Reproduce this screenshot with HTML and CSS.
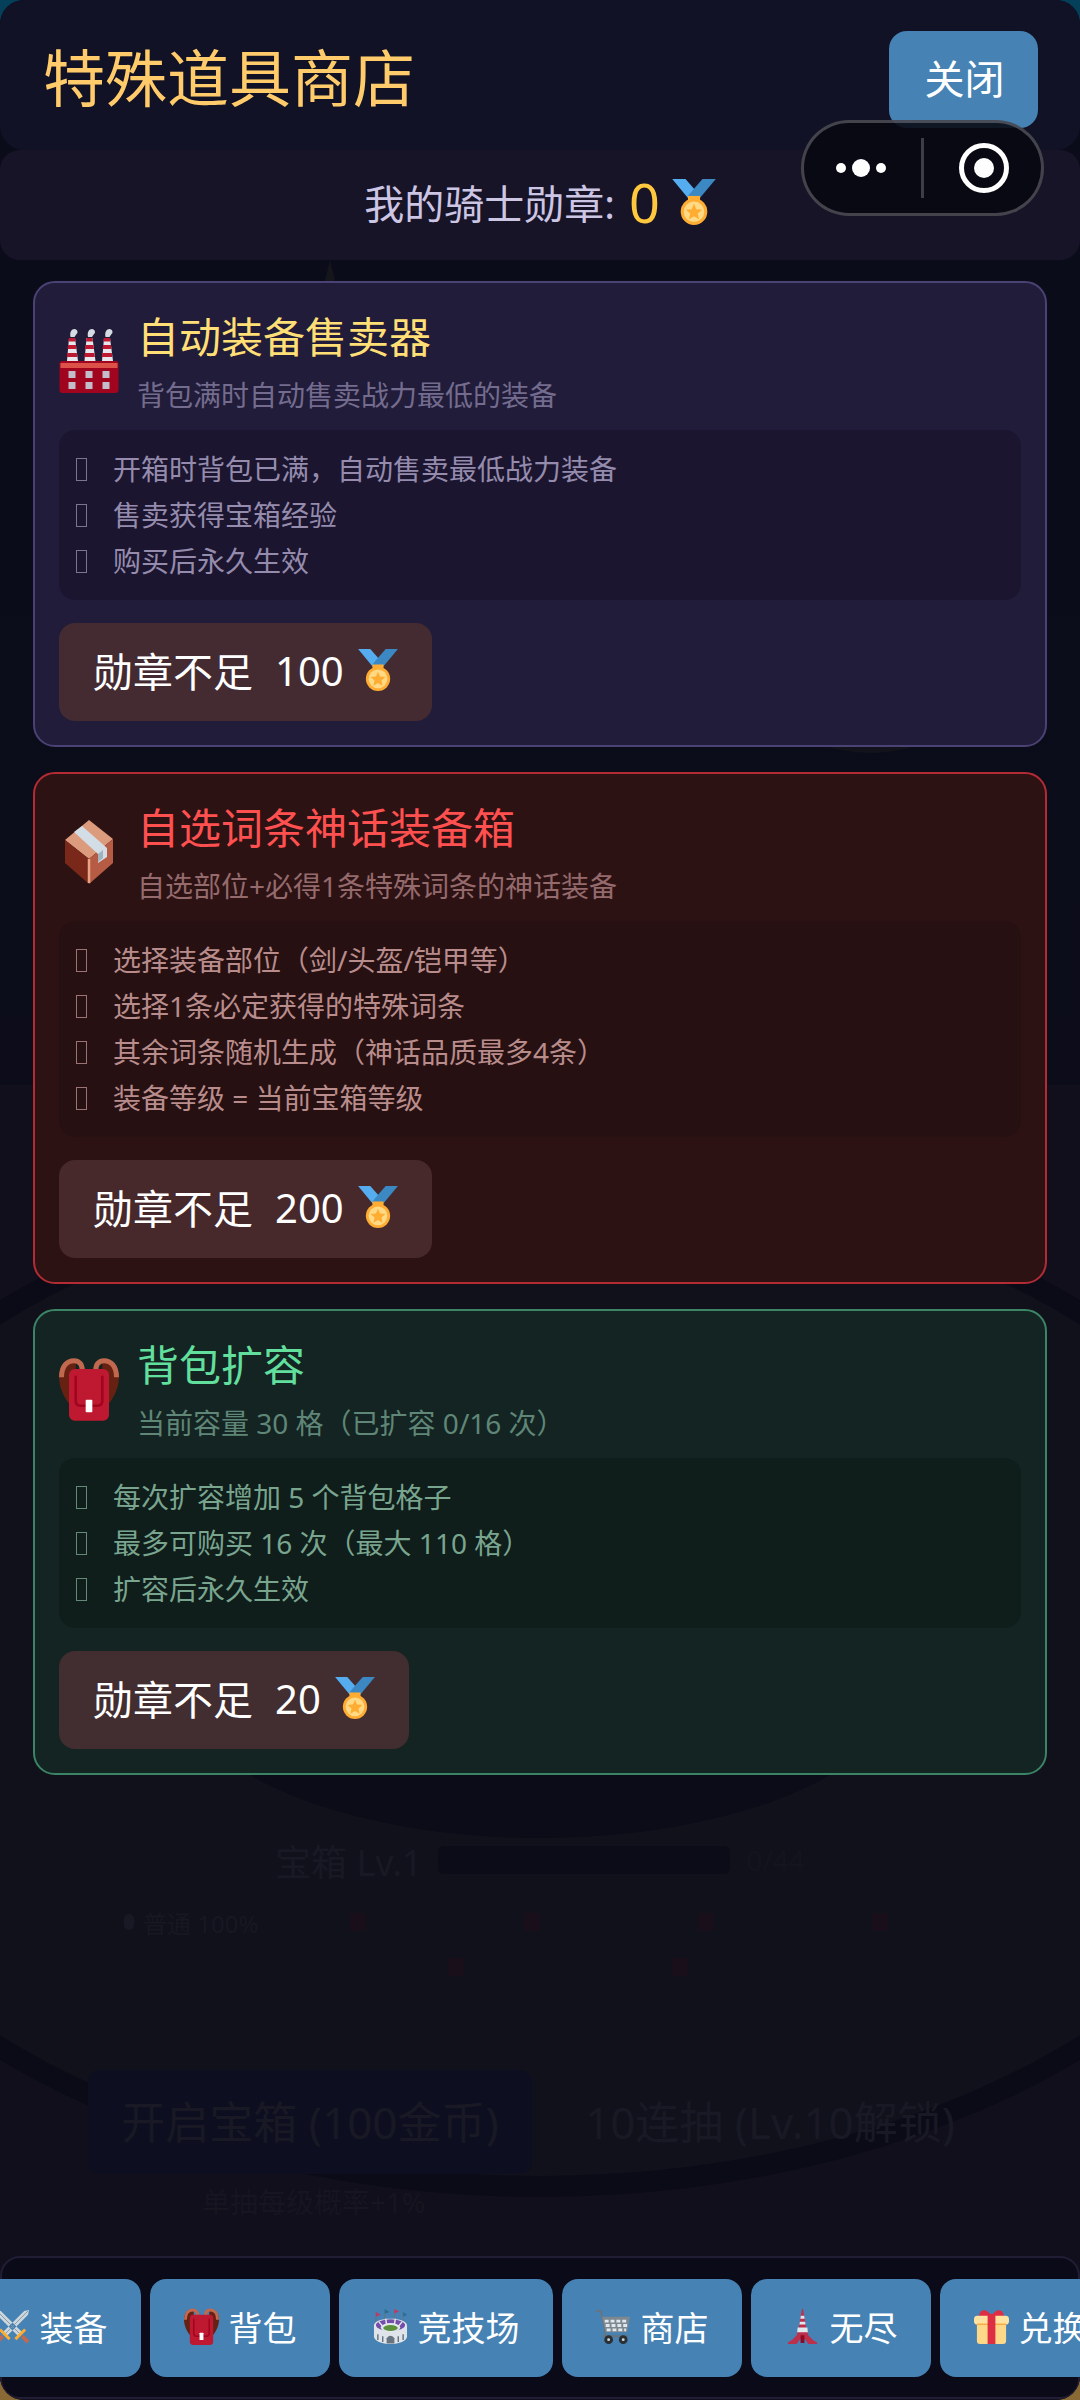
FILE: index.html
```html
<!DOCTYPE html>
<html lang="zh-CN">
<head>
<meta charset="utf-8">
<meta name="viewport" content="width=device-width, initial-scale=1">
<title>特殊道具商店</title>
<link rel="stylesheet" href="styles.css">
</head>
<body>
<svg class="defs" aria-hidden="true">
  <symbol id="medal" viewBox="0 0 36 38">
    <path fill="#55acee" d="M18 8l-7-8H0l14 17 8-6z"/>
    <path fill="#3b88c3" d="M25 0l-7 8-5 6 8 4L36 0z"/>
    <path fill="#ffac33" d="M13 14h10v4H13z"/>
    <circle cx="18" cy="27" r="11" fill="#ffac33"/>
    <circle cx="18" cy="27" r="8.500" fill="#ffd983"/>
    <path fill="#ffac33" d="M18 20.500l1.900 4.400 4.800.4-3.600 3.200 1.100 4.700-4.200-2.500-4.200 2.500 1.100-4.700-3.600-3.200 4.800-.4z"/>
  </symbol>
  <symbol id="factory" viewBox="0 0 59 64">
    <path fill="#e8e8ec" d="M9.500 9h6l3 23h-11zM27 9h6l3 23H25zM44.500 9h6l3 23h-11z"/>
    <path fill="#be1931" d="M9.500 9h6l.5 3.500H9zM27 9h6l.5 3.500h-7zM44.500 9h6l.5 3.500h-7zM8.600 16h7.800l.6 4H8zM26.100 16h7.800l.6 4h-9zM43.600 16h7.800l.6 4h-9zM7.800 24h9.500l.5 4H7.300zM25.300 24h9.500l.5 4H24.800zM42.800 24h9.500l.5 4H42.300z"/>
    <path fill="#d5dbe3" d="M11 8c-1-5 1-8 4-8s4 4 2 5l-2 3zM28.500 8c-1-5 1-8 4-8s4 4 2 5l-2 3zM46 8c-1-5 1-8 4-8s4 4 2 5l-2 3z"/>
    <rect y="32" width="59" height="32" rx="3" fill="#a0041e"/>
    <path fill="#dd5248" d="M1 34h57v5H1z"/>
    <path fill="#c3bccb" d="M9 42h7v7H9zM26 42h7v7h-7zM43 42h7v7h-7zM9 53h7v7H9zM26 53h7v7h-7zM43 53h7v7h-7z"/>
  </symbol>
  <symbol id="box" viewBox="0 0 48 64">
    <path fill="#dd9b7d" d="M24 0l24 19-24 20L0 20z"/>
    <path fill="#79281a" d="M0 20l24 19v25L0 43z"/>
    <path fill="#b65b44" d="M48 19L24 39v25l24-21z"/>
    <path fill="#d3dde5" d="M9 12l8-6 25 22v9l-9 6v-9z"/>
    <path fill="#9fb2bd" d="M33 34l5-4v8l-5 4z"/>
    <path stroke="#e6a584" stroke-width="2.500" d="M24 39v24"/>
  </symbol>
  <symbol id="backpack" viewBox="0 0 36 38">
    <path fill="#662113" d="M10 1C3 1 0 6 0 12c0 7 4 14 8 18l2-16zM26 1c7 0 10 5 10 11 0 7-4 14-8 18l-2-16z"/>
    <path fill="none" stroke="#c1694f" stroke-width="3" d="M1.500 12C1.500 5 5 2 9 2c3 0 5 2 5 6M34.500 12C34.500 5 31 2 27 2c-3 0-5 2-5 6"/>
    <rect x="6" y="7" width="24" height="31" rx="3.500" fill="#be1931"/>
    <path fill="none" stroke="#a0041e" stroke-width="1.500" d="M10 11v15q0 3 3 3h10q3 0 3-3V11"/>
    <rect x="16" y="25.500" width="4" height="7.500" rx=".5" fill="#fff"/>
  </symbol>
  <symbol id="swords" viewBox="0 0 36 36">
    <path fill="#ccd6dd" d="M1 1l5 1 22 22-4 4L2 6zM35 1l-5 1L8 24l4 4L34 6z"/>
    <path stroke="#8899a6" d="M2 2l24 24M34 2L10 26"/>
    <path stroke="#ffac33" stroke-width="3" d="M21 31l10-10M15 31L5 21"/>
    <path stroke="#bf6952" stroke-width="4" d="M28 28l6 6M8 28l-6 6"/>
  </symbol>
  <symbol id="stadium" viewBox="0 0 36 36">
    <path stroke="#66757f" d="M3 3v12M12 1v10M22 1v10M31 3v12"/>
    <path fill="#be3a66" d="M3 3l5 3-5 2zM22 0l5 2.500-5 2z"/><path fill="#286f96" d="M12 0l5 3-5 2zM31 3l4 3-4 2z"/>
    <path fill="#dfe4ea" d="M1 17c0-4.500 8-7 17-7s17 2.500 17 7v11c0 5-8 8-17 8S1 33 1 28z"/>
    <ellipse cx="18" cy="16.500" rx="15" ry="6" fill="#744eaa"/>
    <ellipse cx="18" cy="19" rx="10" ry="4.500" fill="#e1e8ed"/>
    <ellipse cx="18" cy="19.500" rx="7.500" ry="3" fill="#5c913b"/>
    <path stroke="#e1e8ed" stroke-width="1.500" d="M6 13l4 5M13 10l1 6M23 10l-1 6M30 13l-4 5"/>
    <path stroke="#66757f" stroke-width="1.500" d="M5 26v6M10 28v6M26 28v6M31 26v6"/>
    <path fill="#66757f" d="M14 35.500V30q4-5 8 0v5.500z"/>
  </symbol>
  <symbol id="cart" viewBox="0 0 36 36">
    <path fill="none" stroke="#66757f" stroke-width="2" d="M0 2h5l5 22-2 4h25"/>
    <path fill="#7d8890" d="M6 8h29l-3 16H10z"/>
    <path stroke="#e1e8ed" stroke-width="3" stroke-dasharray="4 2" d="M9 12.500h24M10 17h22M11 21.500h20"/>
    <circle cx="13" cy="31.500" r="3" fill="#ccd6dd" stroke="#292f33" stroke-width="3"/>
    <circle cx="28" cy="31.500" r="3" fill="#ccd6dd" stroke="#292f33" stroke-width="3"/>
  </symbol>
  <symbol id="tower" viewBox="0 0 36 36">
    <path fill="#be2f4c" d="M17.500 0h1l3.500 20 2 7q4 5 9 7.500V36h-9l-3.500-5h-5L12 36H3v-1.500q5-2.500 9-7.500l2-7z"/>
    <path fill="#e1e8ed" d="M16.300 7h3.400l.5 3h-4.400zM15.300 13h5.400l.5 3h-6.400zM13 19h10l.5 5h-11z"/>
    <path fill="#8c0a28" d="M16 27h4v8h-4z"/>
  </symbol>
  <symbol id="gift" viewBox="0 0 36 36">
    <path fill="#dd2e44" d="M18 8C15 0 6-2 5 8zM18 8c3-8 12-10 13 0z"/>
    <rect x="3" y="12" width="30" height="24" rx="3" fill="#fdd888"/>
    <rect x="0" y="7" width="36" height="9" rx="3.500" fill="#ffe1a0"/>
    <path fill="#fcab40" d="M3 15h30v1.500H3z"/>
    <path fill="#dd2e44" d="M14 5h8v31h-8z"/>
  </symbol>
</svg>

<div class="app">
  <div class="scene" aria-hidden="true">
    <svg class="scene-art" viewBox="0 0 1080 2400" preserveAspectRatio="none">
      <rect y="1085" width="1080" height="1315" fill="#110f1b"/>
      <ellipse cx="870" cy="560" rx="170" ry="193" fill="#12121a"/>
      <path d="M318 310l12-50 12 50z" fill="#15151c"/>
      <ellipse cx="540" cy="1680" rx="796" ry="517" fill="#0b0b18"/>
      <ellipse cx="540" cy="1680" rx="774" ry="496" fill="#10111b"/>
      <ellipse cx="540" cy="1680" rx="363" ry="158" fill="#0c0c18"/>
    </svg>
    <div class="ghost">
      <div class="ghost-level"><span>宝箱 Lv.1</span><span class="ghost-bar"></span><span class="ghost-small">0/44</span></div>
      <div class="ghost-odds"><span class="ghost-dot"></span><span>普通 100%</span><i></i><i></i><i></i><i></i></div>
      <div class="ghost-locks"><i></i><i></i></div>
      <div class="ghost-actions"><span class="ghost-open">开启宝箱 (100金币)</span><span class="ghost-ten">10连抽 (Lv.10解锁)</span></div>
      <div class="ghost-note">单抽每级概率+1%</div>
    </div>
  </div>

  <header class="header">
    <h1>特殊道具商店</h1>
    <button class="close" type="button">关闭</button>
    <div class="capsule">
      <button type="button" aria-label="更多"><svg width="50" height="20" viewBox="0 0 50 20" fill="#fff"><circle cx="5" cy="10" r="5"/><circle cx="25" cy="10" r="9"/><circle cx="45" cy="10" r="5"/></svg></button>
      <button type="button" aria-label="退出"><svg width="52" height="52" viewBox="0 0 52 52"><circle cx="26" cy="26" r="22.500" fill="none" stroke="#fff" stroke-width="5"/><circle cx="26" cy="26" r="10" fill="#fff"/></svg></button>
    </div>
  </header>

  <div class="balance"><span>我的骑士勋章:</span><strong>0</strong><svg class="medal-lg"><use href="#medal"/></svg></div>

  <main class="cards">
    <section class="card purple">
      <div class="card-head"><svg class="item-icon"><use href="#factory"/></svg><div><h2>自动装备售卖器</h2><p>背包满时自动售卖战力最低的装备</p></div></div>
      <ul><li>开箱时背包已满，自动售卖最低战力装备</li><li>售卖获得宝箱经验</li><li>购买后永久生效</li></ul>
      <button class="buy" type="button"><span>勋章不足</span><span class="price">100<svg class="medal"><use href="#medal"/></svg></span></button>
    </section>
    <section class="card red">
      <div class="card-head"><svg class="item-icon"><use href="#box"/></svg><div><h2>自选词条神话装备箱</h2><p>自选部位+必得1条特殊词条的神话装备</p></div></div>
      <ul><li>选择装备部位（剑/头盔/铠甲等）</li><li>选择1条必定获得的特殊词条</li><li>其余词条随机生成（神话品质最多4条）</li><li>装备等级 = 当前宝箱等级</li></ul>
      <button class="buy" type="button"><span>勋章不足</span><span class="price">200<svg class="medal"><use href="#medal"/></svg></span></button>
    </section>
    <section class="card green">
      <div class="card-head"><svg class="item-icon"><use href="#backpack"/></svg><div><h2>背包扩容</h2><p>当前容量 30 格（已扩容 0/16 次）</p></div></div>
      <ul><li>每次扩容增加 5 个背包格子</li><li>最多可购买 16 次（最大 110 格）</li><li>扩容后永久生效</li></ul>
      <button class="buy" type="button"><span>勋章不足</span><span class="price">20<svg class="medal"><use href="#medal"/></svg></span></button>
    </section>
  </main>

  <nav class="tabs">
    <button type="button"><svg><use href="#swords"/></svg>装备</button>
    <button type="button"><svg><use href="#backpack"/></svg>背包</button>
    <button type="button"><svg><use href="#stadium"/></svg>竞技场</button>
    <button type="button"><svg><use href="#cart"/></svg>商店</button>
    <button type="button"><svg><use href="#tower"/></svg>无尽</button>
    <button type="button"><svg><use href="#gift"/></svg>兑换</button>
  </nav>
</div>
</body>
</html>
```

FILE: styles.css
```css
* { box-sizing: border-box; }
body {
  margin: 0;
  background: linear-gradient(#044059, #044059 50%, #8a6a34 50%);
  font-family: "Noto Sans", "Noto Sans CJK SC", sans-serif;
  color: #fff;
}
h1, h2, p, ul { margin: 0; padding: 0; font-weight: 400; }
button { border: 0; padding: 0; font: inherit; color: #fff; cursor: pointer; }
svg { display: block; flex: none; }
.defs { position: absolute; width: 0; height: 0; }

.app {
  position: relative;
  display: flex;
  flex-direction: column;
  min-height: 100vh;
  border-radius: 24px;
  background: linear-gradient(#0a0c19, #0e0d1a);
  overflow: hidden;
}

/* Dimmed game scene that shows through behind the shop */
.scene { position: absolute; inset: 0; }
.scene-art { width: 100%; height: 100%; }
.ghost {
  position: absolute;
  left: 0; right: 0; bottom: 170px;
  height: 400px;
  display: flex;
  flex-direction: column;
  color: #181924;
}
.ghost-level { display: flex; justify-content: center; align-items: center; gap: 16px; height: 60px; font-size: 36px; }
.ghost-bar { width: 292px; height: 28px; border-radius: 6px; background: #0c0b18; }
.ghost-small { font-size: 28px; color: #14141f; }
.ghost-odds { display: flex; align-items: center; height: 64px; padding-left: 124px; font-size: 24px; color: #171822; }
.ghost-dot { width: 10px; height: 16px; margin-right: 9px; border-radius: 5px; background: #181924; }
.ghost-odds i, .ghost-locks i { width: 16px; height: 18px; background: #180f1b; }
.ghost-odds i { margin-left: 158px; }
.ghost-odds i:nth-of-type(1) { margin-left: 92px; }
.ghost-locks { display: flex; justify-content: center; gap: 208px; height: 20px; padding: 4px 0 0 56px; }
.ghost-actions { display: flex; gap: 16px; margin-top: 96px; padding: 0 88px; font-size: 44px; line-height: 104px; text-align: center; }
.ghost-open { flex: 1; border-radius: 12px; background: #0d0f20; }
.ghost-ten { flex: 1; }
.ghost-note { padding-left: 202px; font-size: 28px; line-height: 56px; color: #161520; }

.header {
  position: relative;
  z-index: 1;
  display: flex;
  align-items: flex-start;
  justify-content: space-between;
  height: 150px;
  padding: 31px 42px 0 43px;
  border-radius: 24px;
  background: #111225;
}
.header h1 { font-size: 62px; line-height: 94px; color: #ffcb6b; }
.close { width: 149px; height: 97px; padding: 0 0 6px 2px; border-radius: 18px; background: #4682b4; font-size: 40px; }
.capsule {
  position: absolute;
  top: 120px;
  right: 36px;
  display: flex;
  width: 243px;
  height: 96px;
  border: 3px solid rgba(255, 255, 255, .24);
  border-radius: 48px;
  background: rgba(8, 8, 17, .88);
}
.capsule button { flex: 1; display: grid; place-items: center; background: none; }
.capsule button:first-child { padding-right: 4px; }
.capsule button:last-child { padding-left: 4px; }
.capsule button + button::before { content: ""; position: absolute; left: 117px; top: 15px; width: 3px; height: 60px; background: #3d3d47; }

.balance {
  position: relative;
  display: flex;
  align-items: center;
  justify-content: center;
  height: 110px;
  padding-bottom: 6px;
  border-radius: 20px;
  background: #171428;
  font-size: 40px;
  color: #ccc5e3;
}
.balance strong { margin: 0 12px 0 14px; font-size: 54px; font-weight: 400; color: #ffc83d; }
.medal-lg { width: 44px; height: 46px; }

.cards {
  position: relative;
  flex: 1;
  display: flex;
  flex-direction: column;
  gap: 25px;
  padding: 21px 33px;
}
.card { padding: 24px; border: 2px solid; border-radius: 22px; }
.card-head { display: flex; gap: 18px; height: 123px; }
.card-head h2 { margin-top: 1px; font-size: 42px; line-height: 58px; }
.card-head p { font-size: 28px; line-height: 58px; }
.item-icon { width: 60px; height: 64px; margin-top: 22px; }
.card ul { padding: 16px; border-radius: 16px; list-style: none; font-size: 28px; line-height: 46px; }
.card li { display: flex; align-items: center; }
.card li::before { content: ""; width: 9px; height: 21px; margin: 0 26px 0 1px; border: 1px solid; opacity: .8; }
.buy {
  display: inline-flex;
  align-items: center;
  gap: 22px;
  height: 98px;
  margin-top: 23px;
  padding: 0 34px 4px;
  border-radius: 16px;
  background: #442b32;
  font-size: 40px;
  vertical-align: top;
}
.price { display: flex; align-items: center; gap: 14px; }
.medal { width: 40px; height: 42px; }

.purple { background: #211c39; border-color: #4a4275; }
.purple h2 { color: #ffdf76; }
.purple p { color: #746c8e; }
.purple ul { background: #1b1530; color: #958cad; }
.red { background: #2d1214; border-color: #b32b33; }
.red h2 { color: #ff5050; }
.red p { color: #956a6c; }
.red ul { background: #271011; color: #b98c8c; }
.red .buy { background: #47292c; }
.green { background: #132422; border-color: #3c8466; }
.green h2 { color: #62de9d; }
.green p { color: #5f8677; }
.green ul { background: #0f1d1b; color: #79a58f; }
.green .buy { background: #422d30; }

.tabs {
  position: relative;
  display: flex;
  justify-content: center;
  gap: 9px;
  height: 143px;
  margin-bottom: 1px;
  padding-top: 21px;
  border: 2px solid #201d35;
  border-radius: 20px;
  background: #0a0a18;
}
.tabs button {
  flex: none;
  display: flex;
  align-items: center;
  gap: 10px;
  height: 98px;
  padding: 0 33px 4px 34px;
  border-radius: 16px;
  background: #4682b4;
  font-size: 34px;
}
.tabs svg { width: 35px; height: 37px; }
```
